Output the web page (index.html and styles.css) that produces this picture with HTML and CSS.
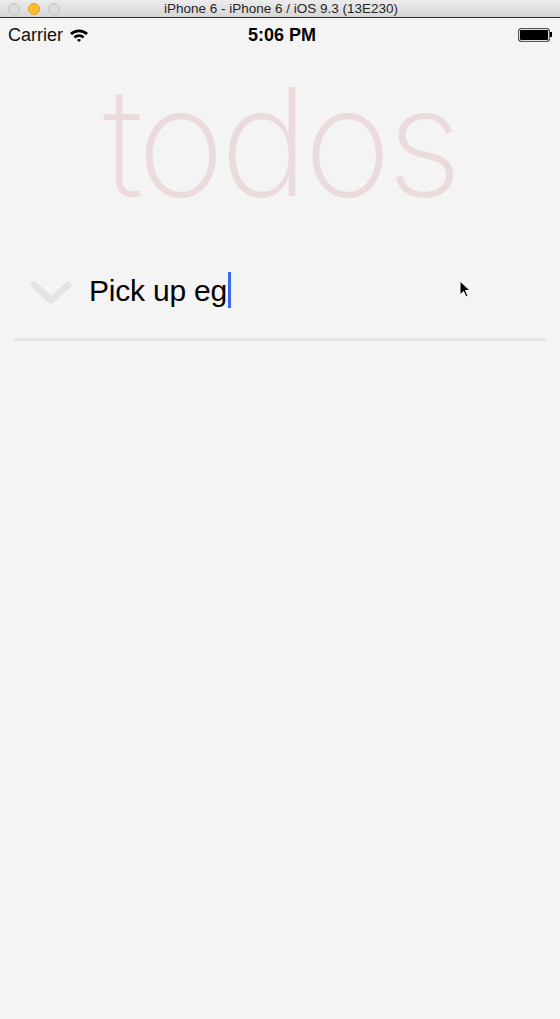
FILE: index.html
```html
<!DOCTYPE html>
<html>
<head>
<meta charset="utf-8">
<link rel="stylesheet" href="styles.css">
</head>
<body>
<div class="titlebar">
  <div class="lights">
    <span class="light grey"></span>
    <span class="light yellow"></span>
    <span class="light grey"></span>
  </div>
  <div class="title">iPhone 6 - iPhone 6 / iOS 9.3 (13E230)</div>
</div>
<div class="screen">
  <div class="statusbar">
    <div class="carrier">Carrier
      <svg class="wifi" width="20" height="14" viewBox="0 0 20 14">
        <path d="M1 5 A13 13 0 0 1 19 5 L17 7 A10 10 0 0 0 3 7 Z" fill="#000"/>
        <path d="M4.5 8.5 A8 8 0 0 1 15.5 8.5 L13.5 10.5 A5 5 0 0 0 6.5 10.5 Z" fill="#000"/>
        <path d="M8 12 A3 3 0 0 1 12 12 L10 14 Z" fill="#000"/>
      </svg>
    </div>
    <div class="time">5:06 PM</div>
    <div class="battery"><span class="cell"></span><span class="tip"></span></div>
  </div>
  <h1 class="logo">todos</h1>
  <div class="entry">
    <svg class="chevron" width="42" height="24" viewBox="0 0 42 24">
      <path d="M4 4 L21 19 L38 4" fill="none" stroke="#e4e4e4" stroke-width="7" stroke-linecap="round" stroke-linejoin="round"/>
    </svg>
    <div class="text">Pick up eg<span class="caret"></span></div>
  </div>
  <div class="divider"></div>
  <svg class="pointer" width="14" height="20" viewBox="0 0 14 20">
    <path d="M1 1 L1 15 L4.5 11.5 L7 17 L9 16 L6.5 10.5 L11 10.5 Z" fill="#000" stroke="#fff" stroke-width="1"/>
  </svg>
</div>
</body>
</html>
```
FILE: styles.css
```css
* { box-sizing: border-box; }
html, body { margin: 0; padding: 0; }
body {
  width: 560px;
  height: 1019px;
  background: #f4f4f4;
  font-family: "Liberation Sans", Arial, sans-serif;
  overflow: hidden;
}
.titlebar {
  height: 18px;
  background: linear-gradient(#ececec, #d6d6d6);
  border-bottom: 1px solid #2a2a2a;
  display: flex;
  align-items: center;
  position: relative;
}
.lights {
  display: flex;
  gap: 8px;
  padding-left: 8px;
}
.light {
  width: 12px;
  height: 12px;
  border-radius: 50%;
  display: block;
}
.light.grey { background: #dcdcdc; border: 1px solid #c4c4c4; }
.light.yellow { background: #fdbc2e; border: 1px solid #e1a326; }
.title {
  position: absolute;
  left: 0; right: 0; top: 0;
  text-align: center;
  font-size: 13.5px;
  line-height: 17px;
  color: #262626;
  padding-left: 2px;
}
.screen { position: relative; }
.statusbar {
  height: 32px;
  display: flex;
  align-items: center;
  justify-content: space-between;
  padding: 3px 8px 0 8px;
  position: relative;
}
.carrier {
  font-size: 18px;
  display: flex;
  align-items: center;
  gap: 6px;
  color: #111;
}
.wifi { margin-top: -2px; }
.time {
  position: absolute;
  left: 0; right: 0;
  top: 1px;
  line-height: 32px;
  text-align: center;
  font-size: 18px;
  font-weight: 700;
  padding-left: 4px;
}
.battery {
  display: flex;
  align-items: center;
  margin-top: -2px;
}
.cell {
  width: 32px;
  height: 14px;
  border: 1px solid #555;
  border-radius: 3px;
  background: #000;
  box-shadow: inset 0 0 0 1px #ddd;
  display: block;
}
.tip {
  width: 2px;
  height: 5px;
  background: #000;
  display: block;
}
.logo {
  margin: 0;
  text-align: center;
  font-family: "Inter", "Lato", sans-serif;
  font-weight: 200;
  font-size: 150px;
  line-height: 170px;
  color: #ebdcdb;
  letter-spacing: -5px;
  height: 178px;
  padding-top: 7px;
  padding-left: 0;
}
.entry {
  display: flex;
  align-items: center;
  height: 80px;
  margin-top: 23px;
  padding-left: 30px;
  gap: 17px;
}
.chevron { margin-top: 4px; }
.text {
  font-size: 30px;
  color: #000;
  display: flex;
  align-items: center;
  letter-spacing: -0.2px;
}
.caret {
  display: inline-block;
  width: 3px;
  height: 36px;
  background: #3a66f0;
  margin-left: 1px;
  margin-top: -2px;
}
.divider {
  margin: 7px 14px 0 14px;
  height: 3px;
  background: #e6e6e6;
}
.pointer {
  position: absolute;
  left: 459px;
  top: 262px;
}
```
